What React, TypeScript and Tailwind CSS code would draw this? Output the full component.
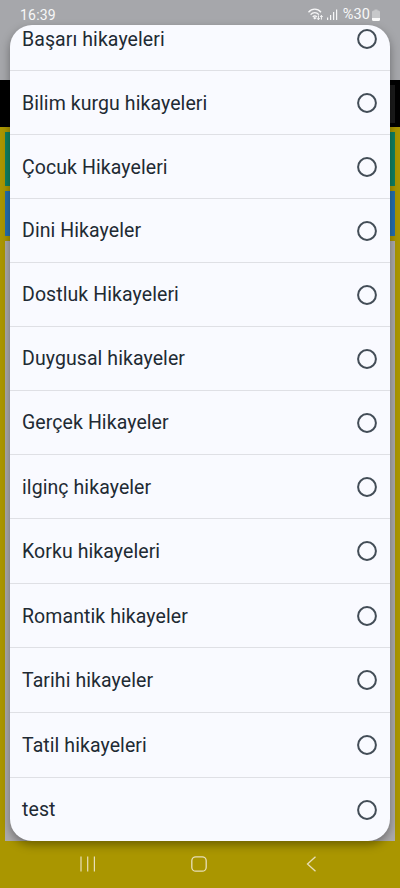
interface StoryOption {
  label: string
  height: string
  padding: string
}

const options: StoryOption[] = [
  { label: 'Başarı hikayeleri', height: 'h-16', padding: 'pt-[3px]' },
  { label: 'Bilim kurgu hikayeleri', height: 'h-16', padding: 'pt-[3px]' },
  { label: 'Çocuk Hikayeleri', height: 'h-16', padding: 'pt-[3px]' },
  { label: 'Dini Hikayeler', height: 'h-16', padding: 'pt-px' },
  { label: 'Dostluk Hikayeleri', height: 'h-16', padding: 'pt-px' },
  { label: 'Duygusal hikayeler', height: 'h-16', padding: 'pt-px' },
  { label: 'Gerçek Hikayeler', height: 'h-16', padding: 'pt-px' },
  { label: 'ilginç hikayeler', height: 'h-16', padding: 'pt-[3px]' },
  { label: 'Korku hikayeleri', height: 'h-[65px]', padding: 'pt-px' },
  { label: 'Romantik hikayeler', height: 'h-16', padding: 'pt-[3px]' },
  { label: 'Tarihi hikayeler', height: 'h-[65px]', padding: 'pt-px' },
  { label: 'Tatil hikayeleri', height: 'h-[65px]', padding: 'pt-px' },
  { label: 'test', height: 'h-16', padding: 'pt-0' },
]

function StatusBar() {
  return (
    <div className="flex h-[30px] items-center justify-between pr-[19px] pl-5 text-[#f7f7f8]">
      <span className="text-[14px] leading-none tracking-[0.2px]">16:39</span>
      <div className="flex items-center">
        <svg width="17" height="14" viewBox="0 0 17 14" fill="none" stroke="#f7f7f8" strokeWidth="1.3">
          <path d="M0.5 4.2C4 0.2 9.5 0.2 13 4.2M2.6 6.6C5 3.9 8.5 3.9 10.9 6.6M4.8 9C6.1 7.4 7.5 7.4 8.8 9" />
          <path d="M6.8 8.6L8.3 10.2L6.8 11.6L5.3 10.2Z" fill="#f7f7f8" stroke="none" />
          <path d="M10.4 7.4V11.8M9 10.2L10.4 11.8L11.7 10.2M13.4 11.6V7.4M12.1 8.9L13.4 7.4L14.7 8.9" strokeWidth="1" />
        </svg>
        <svg className="ml-[2px]" width="12" height="12" viewBox="0 0 12 12" fill="#f7f7f8">
          <rect x="0" y="8.5" width="1.2" height="2.5" />
          <rect x="3" y="6" width="1.2" height="5" />
          <rect x="6" y="3" width="1.2" height="8" />
          <rect x="9" y="0.5" width="1.2" height="10.5" />
        </svg>
        <span className="ml-[4px] text-[14.5px] leading-none tracking-[0.15px]">%30</span>
        <svg className="ml-[2px]" width="9" height="13" viewBox="0 0 9 13" fill="#fafafa">
          <path d="M2.5 1.5V0.5H5.5V1.5H6.5Q8 1.5 8 3V9H0V3Q0 1.5 1.5 1.5Z" fillOpacity="0.4" />
          <path d="M0 9H8V10.5Q8 12 6.5 12H1.5Q0 12 0 10.5Z" />
        </svg>
      </div>
    </div>
  )
}

// The page that stays dimmed behind the dialog
function DimmedPage() {
  return (
    <div className="flex h-[888px] flex-col bg-[#aa9600]">
      <div className="h-20 bg-[#a6a7ab]">
        <StatusBar />
      </div>
      <div className="flex h-[47px] items-center justify-end bg-black pr-[5px]">
        <div className="h-[38px] w-9 bg-[#1a1a1a]" />
      </div>
      <div className="flex flex-col gap-[5px] px-[5px] pt-[5px]">
        <div className="h-[54px] bg-[#0e8062]" />
        <div className="h-[45px] bg-[#266fae]" />
        <div className="h-[600px] bg-[#acaaac]" />
      </div>
    </div>
  )
}

function NavigationBar() {
  return (
    <div className="absolute inset-x-0 bottom-px flex h-[47px] items-center px-[79px]">
      <svg width="18" height="18" viewBox="0 0 18 18" stroke="#e8dfb8" strokeWidth="1.2">
        <path d="M2 1.5V16.5M8.7 1.5V16.5M15.4 1.5V16.5" />
      </svg>
      <svg className="ml-[93px]" width="18" height="18" viewBox="0 0 18 18" fill="none" stroke="#e8dfb8" strokeWidth="1.3">
        <rect x="1.8" y="1.8" width="14.4" height="14.4" rx="4" />
      </svg>
      <svg className="ml-[96px]" width="14" height="18" viewBox="0 0 14 18" fill="none" stroke="#e8dfb8" strokeWidth="1.3">
        <path d="M11.5 1.8L3.5 9L11.5 16.2" />
      </svg>
    </div>
  )
}

export default function App() {
  return (
    <div className="relative h-[888px] w-[400px] overflow-hidden font-['Roboto',sans-serif]">
      <DimmedPage />
      <NavigationBar />
      <div className="absolute top-[25px] left-[10px] h-[816px] w-[379.5px] overflow-hidden rounded-[22px] bg-[#f9faff] shadow-[0_4px_10px_rgba(0,0,0,0.36)]">
        <ul className="-mt-[18px]">
          {options.map((option) => (
            <li
              key={option.label}
              className={`flex items-center justify-between border-b border-[#dfe0e5] pr-[12.5px] pl-3 last:border-b-0 ${option.height}`}
            >
              <span className={`text-[19.5px] leading-6 tracking-[0.08px] text-[#212a33] ${option.padding}`}>
                {option.label}
              </span>
              <svg className="size-5" viewBox="0 0 20 20" fill="none">
                <circle cx="10" cy="10" r="8.9" stroke="#434d57" strokeWidth="2" />
              </svg>
            </li>
          ))}
        </ul>
      </div>
    </div>
  )
}
